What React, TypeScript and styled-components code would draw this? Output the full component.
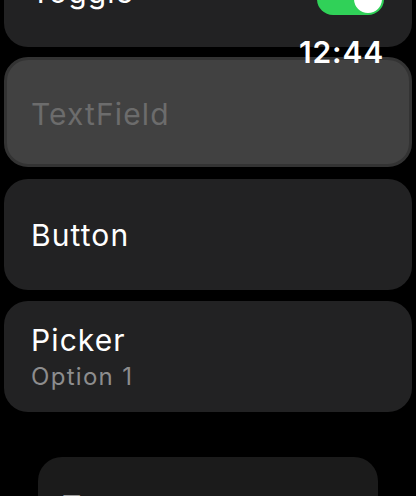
import styled, { createGlobalStyle } from 'styled-components';

const GlobalStyle = createGlobalStyle`
  html, body {
    margin: 0;
    padding: 0;
    background: #000;
    overflow: hidden;
  }
  body {
    font-family: Inter, "Noto Sans", sans-serif;
    -webkit-font-smoothing: antialiased;
  }
`;

const Screen = styled.div`
  position: relative;
  width: 416px;
  height: 496px;
  overflow: hidden;
  background: #000;
`;

const List = styled.div`
  display: flex;
  flex-direction: column;
  margin-top: -64px;
  padding: 0 4px;
`;

const Row = styled.div<{ $gap?: number; $raised?: boolean }>`
  box-sizing: border-box;
  display: flex;
  flex-direction: column;
  justify-content: center;
  height: ${(p) => (p.$raised ? 110 : 111)}px;
  margin-bottom: ${(p) => p.$gap ?? 11}px;
  padding: ${(p) => (p.$raised ? '4px 24px 0' : '0 27px')};
  border-radius: 24px;
  background: ${(p) => (p.$raised ? '#414141' : '#222223')};
  border: ${(p) => (p.$raised ? '3px solid #333' : 'none')};
`;

const ToggleRow = styled(Row)`
  flex-direction: row;
  align-items: center;
  justify-content: space-between;
  padding-right: 28px;
`;

const Label = styled.span<{ $placeholder?: boolean }>`
  font-size: 30px;
  line-height: 36px;
  letter-spacing: 1.1px;
  color: ${(p) => (p.$placeholder ? '#6c6c6c' : '#fff')};
`;

const Value = styled.span`
  font-size: 24px;
  line-height: 30px;
  margin-top: 4px;
  letter-spacing: 1.3px;
  color: #8d8d8e;
`;

const Switch = styled.div`
  position: relative;
  width: 67px;
  height: 32px;
  border-radius: 16px;
  background: #30d158;
  margin-top: 14px;
`;

const Thumb = styled.div`
  position: absolute;
  right: 2px;
  top: 2px;
  width: 28px;
  height: 28px;
  border-radius: 50%;
  background: #fff;
`;

const Clock = styled.div`
  position: absolute;
  top: 34px;
  right: 32px;
  font-size: 30px;
  font-weight: 600;
  letter-spacing: 0.8px;
  color: #fff;
`;

const FooterCard = styled.div`
  box-sizing: border-box;
  height: 120px;
  margin: 45px 34px 0;
  padding: 31px 24px 0;
  border-radius: 24px;
  background: #1b1b1b;
`;

const FooterLabel = styled.span`
  font-size: 30px;
  letter-spacing: 1.1px;
  color: #9a9a9a;
`;

export default function App() {
  return (
    <>
      <GlobalStyle />
      <Screen>
        <List>
          <ToggleRow $gap={10}>
            <Label>Toggle</Label>
            <Switch>
              <Thumb />
            </Switch>
          </ToggleRow>
          <Row $raised $gap={12}>
            <Label $placeholder>TextField</Label>
          </Row>
          <Row>
            <Label>Button</Label>
          </Row>
          <Row $gap={0}>
            <Label>Picker</Label>
            <Value>Option 1</Value>
          </Row>
          <FooterCard>
            <FooterLabel>Text</FooterLabel>
          </FooterCard>
        </List>
        <Clock>12:44</Clock>
      </Screen>
    </>
  );
}
